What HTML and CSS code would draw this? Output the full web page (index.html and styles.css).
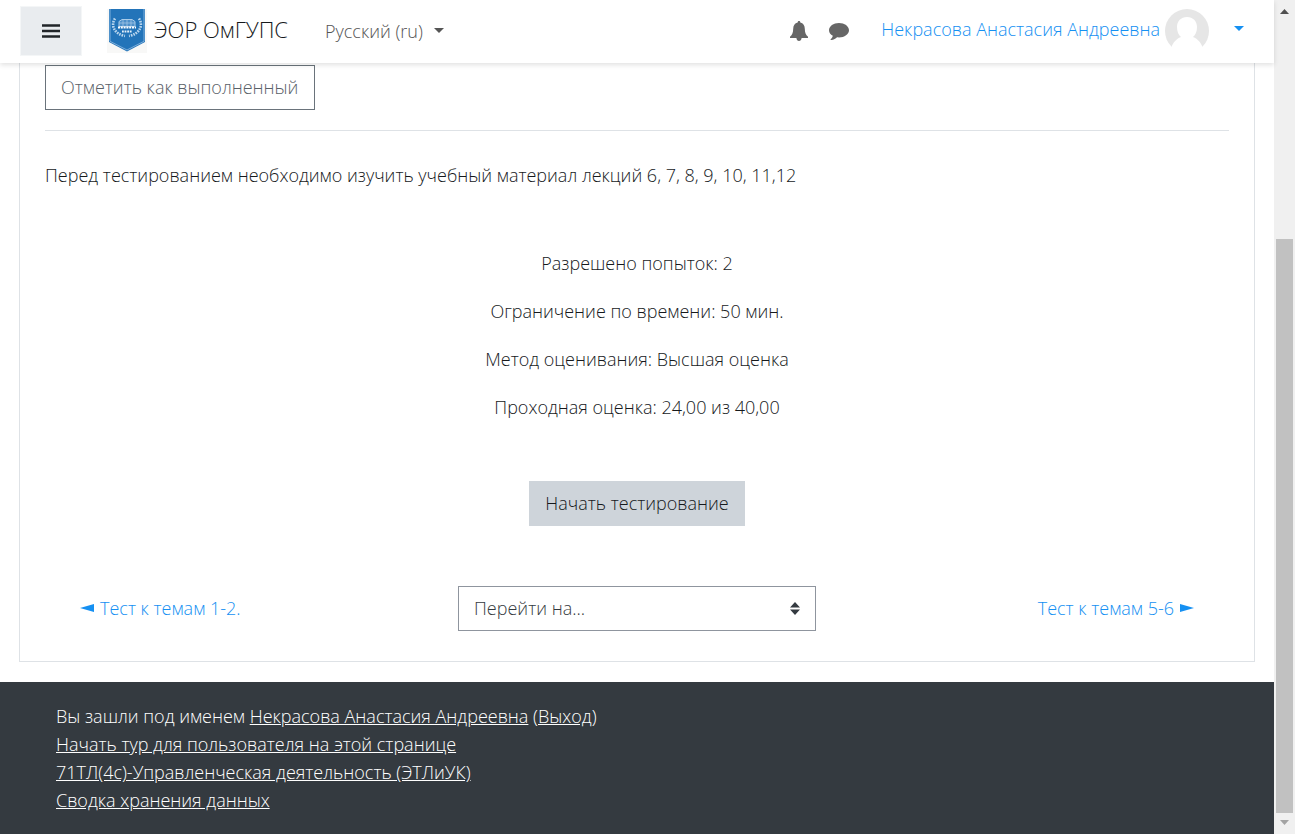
FILE: index.html
```html
<!DOCTYPE html>
<html lang="ru">
<head>
<meta charset="utf-8">
<meta name="viewport" content="width=device-width, initial-scale=1">
<title>ЭОР ОмГУПС</title>
<link rel="stylesheet" href="styles.css">
</head>
<body>
<div class="page">
  <header class="navbar">
    <button class="menu-toggle" type="button" aria-label="Боковая панель">
      <svg width="18" height="14" viewBox="0 0 18 14"><path d="M0 1.5h18M0 7h18M0 12.5h18" stroke="#212529" stroke-width="2.6"/></svg>
    </button>
    <a class="brand" href="#">
      <svg class="brand-logo" width="40" height="44" viewBox="0 0 40 44">
        <path d="M0 0h40v44H0z" fill="#f8f8f7"/>
        <path d="M2 0h36v33L20 42.500 2 33z" fill="#2374b9"/>
        <path d="M3 0v32.300L20 41l17-8.700V0" fill="none" stroke="#7daedb" stroke-width="1"/>
        <path d="M8 9.500C3.500 16 7 25 18 27M32 9.500c4.500 6.500 1 15.500-10 17.500" fill="none" stroke="#b9d6ee" stroke-width="2.600" stroke-dasharray="1.600 1"/>
        <path d="M12 12.500l3-2h10l3 2v5H12z" fill="#4d90ca" stroke="#a9cbe8" stroke-width="1"/>
        <path d="M12 14h16M16 11v6M20 10v7M24 11v6" stroke="#a9cbe8" stroke-width=".7"/>
        <path d="M11 18.500h18" stroke="#fff" stroke-width="2" stroke-dasharray="2 .8"/>
        <path d="M15 22.500h10" stroke="#e5f0f9" stroke-width="2" stroke-dasharray="1.800 .8"/>
      </svg>
      <span>ЭОР ОмГУПС</span>
    </a>
    <button class="language" type="button">Русский (ru) <span class="caret"></span></button>
    <nav class="user-nav">
      <button class="icon-button" type="button" aria-label="Уведомления">
        <svg width="20" height="22" viewBox="0 0 20 22"><path d="M10 1c.9 0 1.400.6 1.300 1.500 3.100.7 4.400 3 4.500 6.200.1 4 .9 6.100 3.200 8v1.300H1v-1.300c2.300-1.900 3.100-4 3.200-8 .1-3.200 1.400-5.500 4.500-6.200C8.600 1.600 9.100 1 10 1zM7.400 18h5.200c-.2 2-1.200 3-2.600 3s-2.400-1-2.600-3z" fill="#666"/></svg>
      </button>
      <button class="icon-button" type="button" aria-label="Сообщения">
        <svg width="20" height="20" viewBox="0 0 20 20"><path d="M10 2C4.500 2 0 5.200 0 9.200c0 2.300 1.500 4.300 3.800 5.600-.3 1.500-1.100 2.500-2.100 3.500-.4.500 0 .9.500.8 2.600-.4 4.500-1.400 5.800-2.800.6.100 1.300.1 2 .1 5.500 0 10-3.200 10-7.200S15.500 2 10 2z" fill="#666"/></svg>
      </button>
      <a class="user-menu" href="#">
        <span>Некрасова Анастасия Андреевна</span>
        <svg width="44" height="44" viewBox="0 0 44 44"><circle cx="22" cy="22" r="22" fill="#e6e6e6"/><path d="M22 8c-6 0-10 4.300-10 10 0 4.700 1.500 8 4 10C11 30 8 34 6.500 38v6h31v-6C36 34 33 30 28 28c2.500-2 4-5.300 4-10 0-5.700-4-10-10-10z" fill="#fff"/></svg>
        <span class="caret"></span>
      </a>
    </nav>
  </header>

  <main class="card">
    <button class="button button-outline" type="button">Отметить как выполненный</button>
    <hr class="divider">
    <p class="intro">Перед тестированием необходимо изучить учебный материал лекций 6, 7, 8, 9, 10, 11,12</p>
    <section class="quiz-info">
      <p>Разрешено попыток: 2</p>
      <p>Ограничение по времени: 50 мин.</p>
      <p>Метод оценивания: Высшая оценка</p>
      <p>Проходная оценка: 24,00 из 40,00</p>
    </section>
    <button class="button button-start" type="button">Начать тестирование</button>
    <div class="activity-nav">
      <a class="activity-link" href="#"><svg width="14" height="8" viewBox="0 0 14 8"><path d="M14 0v8L0 4z" fill="currentColor"/></svg>Тест к темам 1-2.</a>
      <div class="jump">
        <select class="jump-select" aria-label="Перейти на..."><option>Перейти на...</option></select>
        <svg class="jump-arrows" width="10" height="13" viewBox="0 0 10 13"><path d="M5 0l5 5.500H0zM5 13l5-5.500H0z" fill="#343a40"/></svg>
      </div>
      <a class="activity-link activity-next" href="#">Тест к темам 5-6<svg width="14" height="8" viewBox="0 0 14 8"><path d="M0 0v8l14-4z" fill="currentColor"/></svg></a>
    </div>
  </main>

  <footer class="footer">
    <div>Вы зашли под именем <a href="#">Некрасова Анастасия Андреевна</a> (<a href="#">Выход</a>)</div>
    <div><a href="#">Начать тур для пользователя на этой странице</a></div>
    <div><a href="#">71ТЛ(4с)-Управленческая деятельность (ЭТЛиУК)</a></div>
    <div><a href="#">Сводка хранения данных</a></div>
  </footer>
</div>
<div class="scrollbar" aria-hidden="true">
  <svg width="9" height="5" viewBox="0 0 9 5"><path d="M4.500 0L9 5H0z" fill="#505050"/></svg>
  <div class="scroll-track"><div class="scroll-thumb"></div></div>
  <svg width="9" height="5" viewBox="0 0 9 5"><path d="M4.500 5L9 0H0z" fill="#a3a3a3"/></svg>
</div>
</body>
</html>
```
FILE: styles.css
```css
* {
  box-sizing: border-box;
}

body {
  display: flex;
  min-height: 100vh;
  margin: 0;
  background: #fff;
  color: #16191c;
  font: 300 18px/28px "Open Sans", "Noto Sans", sans-serif;
}

button,
select {
  font: inherit;
  color: inherit;
  border-radius: 0;
}

a {
  color: #1590f2;
  text-decoration: none;
}

p {
  margin: 0;
}

svg {
  display: block;
  flex: none;
}

.page {
  display: flex;
  flex: 1;
  flex-direction: column;
  min-width: 0;
}

.navbar {
  position: sticky;
  top: 0;
  z-index: 1;
  display: flex;
  align-items: center;
  height: 63px;
  padding: 0 30px 2px 20px;
  background: #fff;
  box-shadow: 0 2px 5px rgba(0, 0, 0, 0.12);
  white-space: nowrap;
}

.menu-toggle {
  display: grid;
  place-items: center;
  width: 62px;
  height: 50px;
  padding: 0;
  border: 1px solid #f4f6f7;
  background: #e9ecef;
}

.brand {
  display: flex;
  align-items: center;
  gap: 7px;
  margin-left: 25px;
  color: #16191c;
  font-size: 22px;
}

.brand span {
  padding-bottom: 4px;
}

.language {
  display: flex;
  align-items: center;
  gap: 11px;
  margin-left: 37px;
  padding: 0;
  border: 0;
  background: none;
  color: #555;
}

.caret {
  border: 5px solid transparent;
  border-top-color: currentColor;
  border-bottom: 0;
}

.user-nav {
  display: flex;
  align-items: center;
  gap: 20px;
  margin-left: auto;
}

.icon-button {
  padding: 0;
  border: 0;
  background: none;
}

.user-menu {
  display: flex;
  align-items: center;
  gap: 5px;
  margin-left: 12px;
}

.user-menu span:first-child {
  padding-bottom: 4px;
}

.user-menu .caret {
  margin: 0 0 4px 20px;
}

.card {
  display: flex;
  flex-direction: column;
  align-items: center;
  margin: 0 19px 20px;
  padding: 2px 25px 30px;
  border: 1px solid #dee2e6;
  border-top: 0;
}

.button {
  height: 45px;
  padding: 0 15px 2px;
  border: 1px solid #ced4da;
  background: #ced4da;
}

.button-outline {
  align-self: flex-start;
  padding: 0 16px 2px 15px;
  border-color: #6a737b;
  background: #fff;
  color: #596168;
}

.divider {
  width: 100%;
  margin: 20px 0 30px;
  border: 0;
  border-top: 1px solid #dee2e6;
}

.intro {
  align-self: flex-start;
}

.quiz-info {
  display: grid;
  gap: 20px;
  margin: 60px 0;
  text-align: center;
}

.activity-nav {
  display: grid;
  grid-template-columns: 1fr 358px 1fr;
  align-items: center;
  width: 100%;
  margin-top: 60px;
  padding: 0 35px;
}

.activity-link {
  display: flex;
  align-items: center;
  gap: 6px;
  padding-bottom: 2px;
}

.activity-next {
  justify-content: flex-end;
}

.jump {
  position: relative;
}

.jump-select {
  display: block;
  appearance: none;
  width: 100%;
  height: 45px;
  padding: 0 15px 2px;
  border: 1px solid #8f959e;
  background: #fff;
  color: #343a40;
}

.jump-arrows {
  position: absolute;
  top: 16px;
  right: 16px;
  pointer-events: none;
}

.footer {
  flex: 1;
  padding: 20px 56px;
  background: #343a40;
  color: #fff;
}

.footer a {
  color: #fff;
  text-decoration: underline;
}

.scrollbar {
  display: flex;
  flex-direction: column;
  align-items: center;
  gap: 7px;
  width: 21px;
  padding: 9px 2px;
  background: #f0f0f0;
}

.scroll-track {
  display: flex;
  flex: 1;
  align-items: flex-end;
  width: 17px;
}

.scroll-thumb {
  width: 100%;
  height: 72.5%;
  background: #c1c1c1;
}
```
